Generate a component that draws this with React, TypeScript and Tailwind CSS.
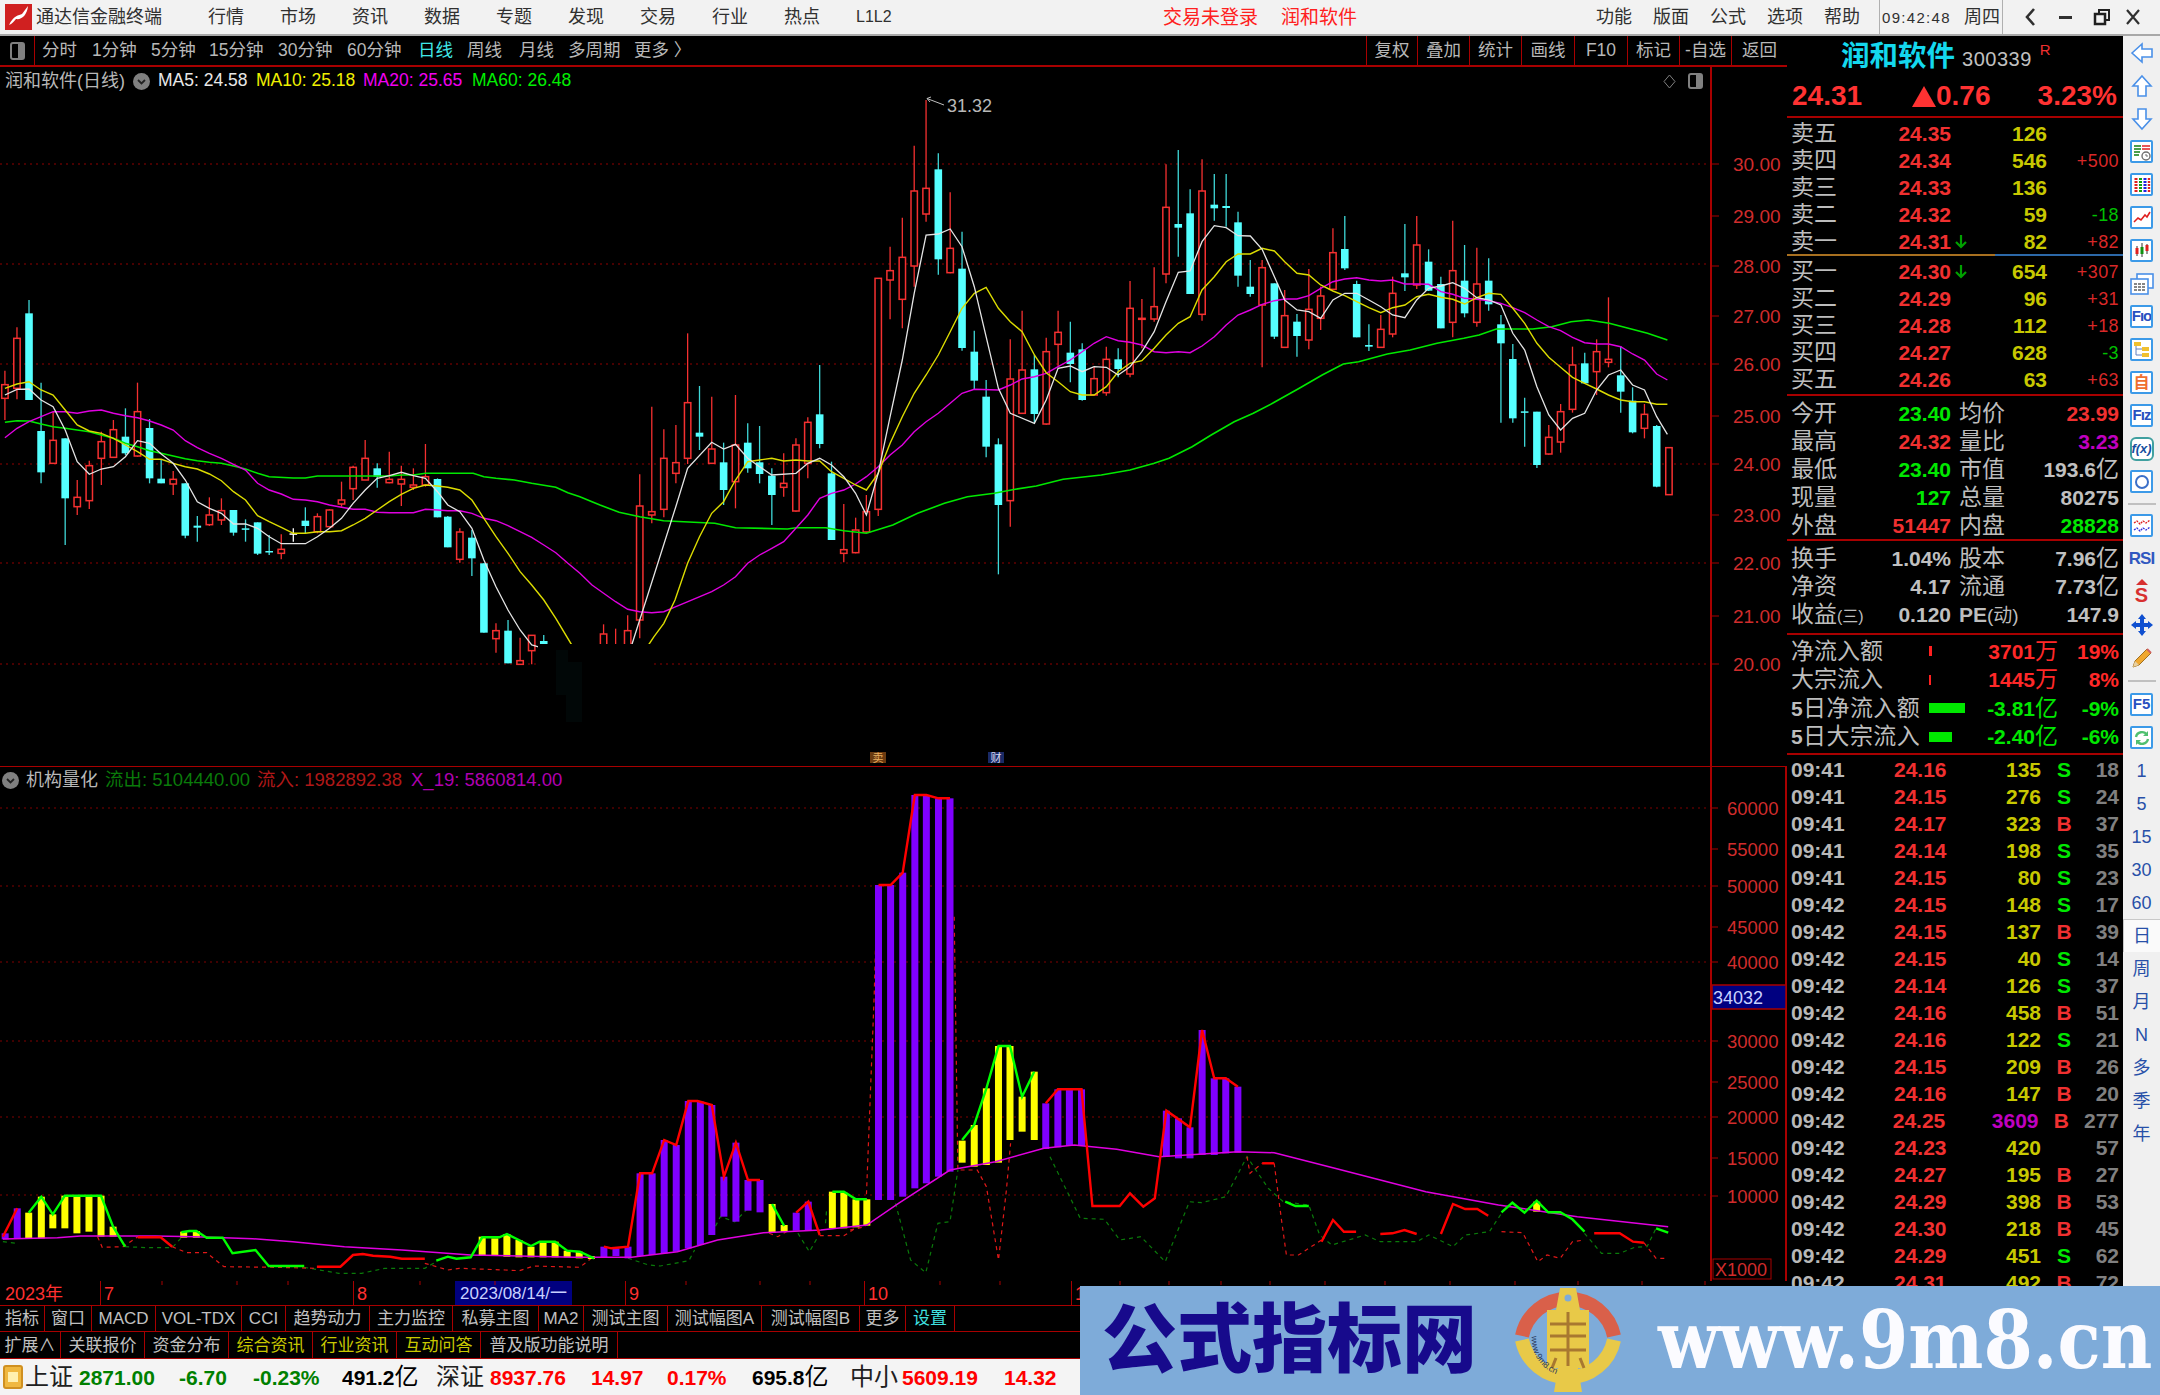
import React from "react";

type C = [number, number, number, number, number, string];
type P = [number, number];
const f8 = (x: number) => x / 2.24;
const f9 = (x: number) => 600 + x / 2.613;
const f10 = (x: number) => 1150 + x / 2.613;
const f11 = (x: number) => x / 1.742;
const f12 = (x: number) => 850 + x / 1.65;

const c8: C[] = [
  [11,302,344,385,450,"r"],[38,172,205,355,388,"r"],[65,90,130,390,390,"c"],[92,338,483,607,640,"c"],[119,425,511,580,582,"r"],[146,505,505,685,825,"c"],[173,630,682,710,735,"r"],[200,572,587,692,717,"r"],[227,485,515,565,645,"r"],[254,450,479,562,562,"r"],[281,415,500,550,555,"c"],[308,338,425,558,560,"r"],[335,447,474,625,640,"c"],[361,570,626,640,640,"c"],[388,603,628,642,675,"r"],[415,640,640,797,805,"c"],[442,738,767,773,815,"c"],[469,682,735,764,768,"r"],[496,685,722,750,765,"r"],[523,720,720,788,797,"c"],[550,748,775,778,815,"c"],[577,757,757,851,855,"c"],[603,795,843,847,855,"c"],[630,793,838,850,868,"r"],[657,775,790,792,815,"w"],[684,712,752,768,790,"c"],[711,730,740,785,790,"r"],[738,718,720,770,772,"r"],[765,635,690,702,710,"r"],[791,587,592,656,690,"r"],[818,510,565,630,630,"r"],[845,580,595,620,653,"c"],[872,545,628,638,640,"r"],[899,587,628,642,708,"r"],[926,595,645,652,660,"r"],[953,522,620,645,650,"r"],[980,625,627,742,742,"c"],[1003,738,740,832,832,"c"],[1030,775,786,868,878,"r"],[1057,780,803,865,918,"c"],[1084,880,880,1088,1088,"c"],[1111,1060,1082,1106,1148,"r"],[1138,1050,1082,1180,1180,"c"],[1165,1103,1172,1183,1185,"r"],[1191,1095,1096,1142,1183,"r"],[1218,1095,1113,1130,1130,"c"],[1352,1063,1092,1200,1200,"r"],[1379,1076,1200,1200,1200,"r"],[1406,1036,1082,1200,1200,"r"],[1433,613,708,1050,1105,"r"],[1460,410,725,735,760,"r"],[1487,478,565,718,742,"r"],[1514,465,578,610,640,"r"],
];
const c9: C[] = [
  [229,760,968,1135,1152,"r"],[260,918,1058,1070,1110,"c"],[292,950,1107,1150,1152,"r"],[323,1088,1147,1230,1275,"c"],[354,945,1095,1205,1285,"r"],[386,1030,1088,1165,1178,"c"],[417,1038,1147,1182,1210,"c"],[449,1165,1187,1245,1335,"c"],[480,1120,1210,1222,1250,"r"],[512,1075,1095,1293,1295,"r"],[543,1012,1027,1150,1195,"r"],[574,855,1003,1092,1105,"c"],[605,1145,1180,1380,1380,"c"],[637,1272,1409,1420,1447,"r"],[668,1313,1350,1418,1420,"r"],[696,1245,1295,1356,1358,"r"],[727,595,595,1288,1308,"r"],[758,500,572,600,718,"r"],[790,413,532,658,745,"r"],[821,197,333,558,620,"r"],[852,60,325,402,425,"r"],[884,220,268,538,584,"c"],[915,337,505,578,580,"r"],[946,455,566,804,812,"c"],[978,752,815,902,930,"c"],[1009,900,950,1100,1132,"c"],[1041,1075,1093,1275,1483,"c"],[1072,778,897,1262,1340,"r"],[1103,692,870,1000,1002,"r"],[1135,825,868,1002,1030,"c"],[1166,773,815,1032,1034,"r"],[1197,692,757,793,860,"r"],[1229,725,818,852,907,"c"],[1260,790,808,960,962,"c"],[1291,860,896,945,945,"r"],[1323,800,838,938,947,"r"],[1354,805,838,867,892,"c"],[1385,603,685,882,892,"r"],[1416,657,715,718,805,"r"],[1448,562,680,717,725,"r"],[1479,253,382,582,610,"r"],[1511,210,432,443,530,"c"],[1542,328,400,642,642,"c"],
];
const c10: C[] = [
  [136,88,183,553,572,"r"],[168,132,224,235,272,"c"],[199,132,228,234,290,"c"],[230,245,277,437,470,"c"],[262,390,470,492,500,"c"],[293,390,413,525,712,"r"],[325,460,460,620,627,"c"],[352,480,557,652,654,"r"],[384,552,575,618,680,"c"],[415,417,538,630,658,"r"],[446,470,498,565,600,"r"],[478,295,368,478,480,"r"],[509,258,357,415,420,"c"],[540,452,462,622,622,"c"],[572,583,645,650,663,"c"],[603,555,598,652,653,"r"],[634,440,490,612,622,"r"],[666,282,430,442,483,"c"],[697,258,345,465,477,"r"],[728,358,395,482,483,"c"],[760,440,462,595,595,"c"],[791,272,422,577,622,"r"],[822,345,452,550,562,"c"],[854,353,462,577,590,"r"],[885,385,452,523,542,"c"],[917,555,583,640,878,"c"],[948,642,687,865,878,"c"],[979,803,844,847,950,"c"],[1011,845,845,1005,1014,"c"],[1042,885,922,972,974,"r"],[1073,822,845,936,968,"r"],[1104,650,705,838,848,"r"],[1136,668,700,760,760,"c"],[1167,628,665,725,795,"r"],[1198,502,688,697,712,"r"],[1230,648,736,785,848,"c"],[1261,772,812,907,910,"c"],[1292,822,853,895,925,"r"],[1324,885,888,1070,1072,"c"],[1356,952,953,1094,1094,"r"],
];
const candles = [
  ...c8.map(([x, a, b, c, d, k]) => [f8(x), 270 + a / 3, 270 + b / 3, 270 + c / 3, 270 + d / 3, k] as const),
  ...c9.map(([x, a, b, c, d, k]) => [f9(x), 80 + a / 3, 80 + b / 3, 80 + c / 3, 80 + d / 3, k] as const),
  ...c10.map(([x, a, b, c, d, k]) => [f10(x), 130 + a / 3, 130 + b / 3, 130 + c / 3, 130 + d / 3, k] as const),
];

const conv = (a: P[], fx: (n: number) => number, y0: number) => a.map(([x, y]) => `${fx(x).toFixed(1)},${(y0 + y / 3).toFixed(1)}`).join(" ");

const white = [
  conv([[11,375],[38,358],[65,357],[92,390],[119,410],[146,480],[173,575],[200,613],[227,597],[254,590],[281,560],[308,512],[335,520],[361,552],[388,580],[415,630],[442,695],[469,715],[496,730],[523,762],[550,762],[577,775],[603,800],[630,821],[684,821],[711,800],[738,775],[765,745],[791,700],[818,660],[845,625],[872,617],[899,607],[926,617],[953,625],[980,665],[1003,705],[1030,725],[1057,775],[1084,870],[1111,950],[1138,1020],[1165,1080],[1191,1125],[1210,1132],[1415,1125],[1433,1050]], f8, 270),
  conv([[122,1555],[198,1280],[229,1165],[292,1087],[323,1107],[354,1093],[386,1135],[417,1160],[449,1185],[512,1180],[543,1150],[574,1135],[605,1155],[637,1190],[668,1240],[696,1305],[727,1180],[758,1010],[790,840],[821,640],[852,465],[884,462],[915,447],[946,500],[978,620],[1009,770],[1041,925],[1072,1000],[1135,1030],[1166,960],[1197,865],[1229,858],[1260,875],[1291,860],[1323,862],[1354,885],[1385,860],[1416,815],[1448,755],[1479,665],[1511,577],[1542,573]], f9, 80),
  conv([[136,335],[168,287],[199,293],[230,317],[262,318],[293,358],[325,440],[352,510],[384,540],[415,545],[446,565],[478,510],[509,490],[540,490],[572,510],[603,530],[634,555],[666,563],[697,510],[728,475],[760,468],[791,458],[822,475],[854,503],[885,510],[917,525],[948,610],[979,660],[1011,770],[1042,855],[1073,900],[1104,865],[1136,850],[1167,780],[1198,735],[1230,720],[1261,765],[1292,780],[1324,860],[1352,913]], f10, 130),
].join(" ");
const yellow = [
  conv([[11,355],[38,342],[65,335],[92,360],[119,375],[146,420],[173,465],[200,483],[227,490],[254,505],[281,525],[308,545],[335,568],[361,568],[388,580],[415,590],[442,597],[469,612],[496,632],[523,665],[550,690],[577,737],[603,755],[630,772],[657,790],[684,790],[711,785],[738,785],[765,782],[791,765],[818,745],[845,720],[872,695],[899,673],[926,655],[953,645],[980,648],[1003,652],[1030,660],[1057,690],[1084,745],[1111,800],[1138,850],[1165,905],[1191,945],[1218,990],[1245,1045],[1283,1130],[1450,1130],[1465,1100],[1487,1060]], f8, 270),
  conv([[196,1560],[229,1450],[260,1370],[292,1300],[323,1265],[354,1200],[386,1145],[417,1140],[449,1135],[480,1143],[512,1140],[543,1143],[574,1143],[605,1175],[637,1195],[668,1215],[696,1230],[727,1180],[758,1090],[790,1010],[821,940],[852,885],[884,825],[915,755],[946,685],[978,640],[1009,622],[1041,685],[1072,725],[1103,755],[1135,825],[1166,878],[1197,905],[1229,935],[1260,945],[1291,945],[1323,920],[1354,875],[1385,850],[1416,842],[1448,805],[1479,765],[1511,730],[1542,710]], f9, 80),
  conv([[136,480],[168,440],[199,395],[230,372],[262,372],[293,355],[325,363],[352,395],[384,430],[415,435],[446,465],[478,483],[509,497],[540,515],[572,533],[603,548],[634,533],[666,525],[697,500],[728,493],[760,502],[791,508],[822,522],[854,503],[885,490],[917,493],[948,535],[979,580],[1011,640],[1042,682],[1073,712],[1104,742],[1136,760],[1167,777],[1198,795],[1230,810],[1261,815],[1292,815],[1324,823],[1352,823]], f10, 130),
].join(" ");
const magenta = [
  conv([[11,503],[38,475],[65,455],[92,440],[119,425],[146,425],[173,430],[200,423],[227,420],[254,430],[281,437],[308,443],[335,453],[361,465],[388,480],[415,512],[442,533],[469,550],[496,565],[523,583],[550,600],[577,640],[603,660],[630,672],[657,688],[684,690],[711,695],[738,705],[765,712],[791,718],[818,718],[845,727],[872,728],[899,728],[926,728],[953,718],[980,720],[1003,722],[1030,722],[1057,730],[1084,745],[1111,752],[1138,767],[1165,785],[1191,802],[1218,825],[1245,848],[1272,880],[1299,910],[1326,945],[1352,970],[1379,995],[1406,1018],[1433,1025],[1460,1028],[1487,1025],[1514,1010],[1541,995]], f8, 270),
  conv([[292,1535],[323,1515],[354,1490],[386,1450],[417,1425],[449,1405],[480,1385],[512,1345],[543,1305],[574,1255],[605,1240],[637,1230],[668,1212],[696,1190],[727,1160],[758,1125],[790,1095],[821,1055],[852,1025],[884,1000],[915,970],[946,940],[978,928],[1041,930],[1072,915],[1103,897],[1135,890],[1166,880],[1197,860],[1229,840],[1260,815],[1291,790],[1323,770],[1354,782],[1385,787],[1416,795],[1448,815],[1479,818],[1511,815],[1542,818]], f9, 80),
  conv([[136,648],[168,620],[199,585],[230,555],[262,540],[293,523],[325,512],[352,507],[384,507],[415,497],[446,475],[478,455],[509,447],[540,443],[572,450],[603,453],[634,450],[666,462],[697,462],[728,463],[760,485],[791,493],[822,505],[854,508],[885,512],[917,520],[948,533],[979,548],[1011,570],[1042,590],[1073,602],[1104,622],[1136,638],[1167,642],[1198,642],[1230,650],[1261,672],[1292,690],[1324,732],[1352,750]], f10, 130),
].join(" ");
const green = [
  conv([[11,457],[38,452],[65,453],[92,462],[119,470],[146,475],[173,480],[200,485],[227,495],[254,505],[281,520],[308,530],[335,542],[361,550],[388,558],[415,566],[442,572],[469,577],[496,580],[523,588],[550,597],[577,610],[603,620],[657,624],[684,624],[711,618],[872,618],[899,615],[926,615],[953,610],[1060,610],[1084,620],[1111,625],[1152,630],[1191,640],[1245,652],[1272,668],[1299,680],[1326,695]], f8, 270),
  conv([[0,1275],[50,1297],[104,1310],[166,1322],[245,1327],[300,1330],[354,1343],[490,1347],[512,1343],[590,1343],[637,1352],[696,1360],[765,1335],[830,1300],[900,1270],[960,1250],[1030,1240],[1085,1228],[1140,1218],[1210,1198],[1310,1185],[1385,1170],[1448,1150]], f9, 80),
  conv([[50,985],[110,950],[160,915],[220,875],[270,850],[320,820],[390,775],[450,735],[505,702],[545,695],[620,672],[680,660],[750,640],[820,625],[860,615],[905,597],[1000,597],[1050,590],[1100,575],[1145,570],[1200,580],[1260,598],[1300,610],[1352,630]], f10, 130),
].join(" ");

const bars11: [number, number, number, string][] = [
  [9,640,658,"p"],[30,565,655,"p"],[50,578,655,"y"],[72,530,655,"y"],[92,583,625,"y"],[113,527,625,"y"],[134,527,640,"y"],[155,527,635,"y"],[176,527,650,"y"],[197,620,650,"y"],[320,635,653,"y"],[342,633,653,"y"],[840,650,708,"y"],[862,655,708,"y"],[883,642,710,"y"],[904,660,712,"y"],[925,680,712,"y"],[946,665,712,"y"],[967,665,712,"y"],[988,692,712,"y"],[1009,695,715,"y"],[1030,708,717,"y"],[1052,680,712,"p"],[1073,685,708,"p"],[1094,680,715,"p"],[1115,460,708,"p"],[1136,460,705,"p"],[1157,360,700,"p"],[1178,375,695,"p"],[1199,243,685,"p"],[1220,245,675,"p"],[1240,255,645,"p"],[1261,470,590,"p"],[1282,368,605,"p"],[1303,480,572,"p"],[1324,480,577,"p"],[1345,552,638,"y"],[1366,615,635,"y"],[1387,578,632,"p"],[1408,545,630,"p"],[1450,515,625,"y"],[1470,518,625,"y"],[1491,538,622,"y"],[1510,538,617,"y"],
];
const bars12: [number, number, number, string][] = [
  [47,315,1260,"p"],[67,315,1260,"p"],[87,278,1250,"p"],[107,45,1225,"p"],[126,45,1210,"p"],[146,55,1190,"p"],[165,55,1175,"p"],[185,1082,1148,"y"],[205,1035,1160,"y"],[225,925,1155,"y"],[245,798,1148,"y"],[264,798,1080,"y"],[284,950,1055,"y"],[304,875,1080,"y"],[323,970,1107,"p"],[343,928,1102,"p"],[362,928,1097,"p"],[382,928,1097,"p"],[522,992,1130,"p"],[542,1015,1135,"p"],[561,1042,1135,"p"],[581,750,1125,"p"],[601,895,1125,"p"],[620,895,1120,"p"],[640,920,1118,"p"],[1133,1265,1295,"y"],
];
const thick: [string, string][] = [
  ["#ff0000", conv([[5,650],[30,565]], f11, 1020)],
  ["#00ff00", conv([[50,578],[72,530],[92,583],[113,527],[176,527],[197,620],[218,680]], f11, 1020)],
  ["#ff0000", conv([[240,652],[280,652],[300,680]], f11, 1020)],
  ["#00ff00", conv([[316,637],[330,633],[342,633],[360,653],[388,653],[405,700],[445,690],[468,738],[530,738]], f11, 1020)],
  ["#ff0000", conv([[552,740],[593,740],[615,705],[632,702],[650,707],[680,710],[700,716],[740,716]], f11, 1020)],
  ["#00ff00", conv([[760,722],[780,710],[795,716],[820,712],[840,652],[870,652],[883,642],[904,660],[925,678],[940,665],[967,665],[988,692],[1010,695],[1035,715]], f11, 1020)],
  ["#ff0000", conv([[1052,680],[1065,685],[1094,680],[1115,460],[1136,460],[1157,360],[1178,375],[1199,243],[1215,243],[1240,255],[1261,470],[1282,368],[1303,480],[1324,480]], f11, 1020)],
  ["#00ff00", conv([[1345,552],[1366,618]], f11, 1020)],
  ["#ff0000", conv([[1387,578],[1408,545],[1428,645]], f11, 1020)],
  ["#00ff00", conv([[1450,515],[1470,515],[1491,538],[1510,538]], f11, 1020)],
  ["#ff0000", conv([[47,315],[67,315],[87,278],[107,45],[126,45],[146,55],[165,55]], f12, 780)],
  ["#00ff00", conv([[185,1080],[205,1035],[225,925],[245,798],[264,798],[284,950],[304,875]], f12, 780)],
  ["#ff0000", conv([[323,970],[343,928],[382,928],[400,1278],[445,1278],[462,1240],[484,1280],[503,1255],[522,992],[561,1042],[581,750],[601,895],[620,895],[640,920]], f12, 780)],
  ["#ff0000", conv([[680,1150],[700,1150]], f12, 780)],
  ["#00ff00", conv([[718,1265],[735,1278],[757,1278]], f12, 780)],
  ["#ff0000", conv([[778,1385],[797,1320],[815,1355],[835,1355]], f12, 780)],
  ["#ff0000", conv([[875,1362],[895,1360],[915,1350],[935,1362]], f12, 780)],
  ["#ff0000", conv([[975,1362],[995,1272],[1015,1287],[1035,1287],[1053,1307]], f12, 780)],
  ["#00ff00", conv([[1075,1297],[1093,1268],[1113,1298],[1133,1262],[1152,1297],[1172,1297],[1192,1318],[1212,1355]], f12, 780)],
  ["#ff0000", conv([[1228,1360],[1270,1360],[1292,1385],[1310,1388]], f12, 780)],
  ["#00ff00", conv([[1330,1345],[1350,1358]], f12, 780)],
];
const subMagenta = [
  conv([[5,657],[60,655],[100,653],[140,648],[270,648],[340,650],[440,656],[510,665],[600,680],[700,690],[820,705],[1000,712],[1100,712],[1180,695],[1250,660],[1330,638],[1430,630],[1510,615]], f11, 1020),
  conv([[80,1270],[165,1170],[240,1145],[320,1105],[370,1095],[440,1108],[510,1130],[640,1115],[700,1118],[800,1165],[950,1235],[1070,1275],[1200,1310],[1350,1340]], f12, 780),
].join(" ");
const dashG: string[] = [
  conv([[75,1270],[100,1440],[125,1478],[145,1330],[165,1325],[178,1170]], f12, 780),
  conv([[330,1130],[380,1315],[420,1318],[445,1380],[480,1370],[520,1445],[560,1265],[580,1268],[620,1250],[655,1130],[690,1225],[715,1265],[757,1275],[775,1365],[795,1395],[850,1365],[875,1385],[935,1385],[955,1365],[995,1400],[1015,1365],[1055,1355],[1075,1300]], f12, 780),
  conv([[1212,1360],[1240,1420],[1270,1420],[1295,1402],[1315,1400],[1330,1345]], f12, 780),
  conv([[5,665],[30,670]], f11, 1020),
  conv([[218,680],[260,683],[300,683],[315,655]], f11, 1020),
  conv([[530,742],[590,760],[630,760],[670,745],[740,745],[760,725]], f11, 1020),
  conv([[1094,715],[1130,735],[1150,738],[1200,722],[1210,690]], f11, 1020),
  conv([[1240,640],[1255,590],[1280,605],[1300,570]], f11, 1020),
  conv([[1390,640],[1410,695],[1425,650]], f11, 1020),
  conv([[1438,610],[1440,570]], f11, 1020),
];
const dashR: string[] = [
  conv([[0,1350],[25,1340],[40,645],[45,315]], f12, 780),
  conv([[172,410],[178,1170],[210,1170],[225,1220],[245,1440],[258,1230],[265,1090]], f12, 780),
  conv([[655,1130],[660,1180],[680,1150]], f12, 780),
  conv([[700,1150],[712,1320],[720,1425],[740,1425],[778,1380]], f12, 780),
  conv([[1075,1355],[1110,1358],[1135,1445],[1150,1425],[1172,1435],[1192,1385],[1212,1380]], f12, 780),
  conv([[1310,1388],[1330,1435],[1350,1435]], f12, 780),
  conv([[170,650],[178,682],[215,680],[240,650]], f11, 1020),
  conv([[300,680],[325,698],[360,698],[390,740],[480,742],[550,745]], f11, 1020),
  conv([[740,730],[780,750],[800,745],[880,750],[905,752],[930,738],[1010,742],[1030,715]], f11, 1020),
  conv([[1340,640],[1355,650],[1370,635]], f11, 1020),
  conv([[1428,647],[1470,647],[1490,625]], f11, 1020),
];

const RED = "#a80000";
const priceLabels: [string, number][] = [["30.00",164],["29.00",216],["28.00",266],["27.00",316],["26.00",364],["25.00",416],["24.00",464],["23.00",515],["22.00",563],["21.00",616],["20.00",664]];
const volLabels: [string, number][] = [["60000",808],["55000",849],["50000",886],["45000",927],["40000",962],["30000",1041],["25000",1082],["20000",1117],["15000",1158],["10000",1196]];

function TopChart() {
  return (
    <svg width="1787" height="699" style={{ display: "block" }}>
      <g transform="translate(0,-67)">
        {[164, 264, 364, 464, 563, 664].map((y) => (
          <line key={y} x1="0" x2="1711" y1={y} y2={y} stroke="#900000" strokeDasharray="2 4" />
        ))}
        <line x1="1711" x2="1711" y1="67" y2="766" stroke={RED} strokeWidth="2" />
        {priceLabels.map(([t, y]) => (
          <g key={t}>
            <line x1="1711" x2="1719" y1={y} y2={y} stroke={RED} />
            <text x="1733" y={y + 7} fill="#d02c2c" fontSize="19">{t}</text>
          </g>
        ))}
        {candles.map(([x, a, b, c, d, k], i) => {
          const col = k === "r" ? "#f53030" : k === "c" ? "#55ffff" : "#ffffff";
          const wick = k === "c" ? "#3fd8d8" : col;
          return (
            <g key={i}>
              <line x1={x} x2={x} y1={a} y2={d} stroke={wick} strokeWidth="1.3" />
              {k === "r" ? (
                <rect x={x - 3.2} y={b} width="6.4" height={Math.max(c - b, 1)} fill="#000" stroke={col} strokeWidth="1.5" />
              ) : (
                <rect x={x - 3.8} y={b} width="7.6" height={Math.max(c - b, 1.5)} fill={col} />
              )}
            </g>
          );
        })}
        <polyline points={green} fill="none" stroke="#00e800" strokeWidth="1.6" />
        <polyline points={magenta} fill="none" stroke="#e000e0" strokeWidth="1.4" />
        <polyline points={yellow} fill="none" stroke="#dcdc00" strokeWidth="1.4" />
        <polyline points={white} fill="none" stroke="#e4e4e4" strokeWidth="1.3" />
        <rect x="538" y="644" width="113" height="122" fill="#000" />
        <rect x="556" y="650" width="12" height="45" fill="#010707" />
        <rect x="566" y="662" width="16" height="60" fill="#010707" />
        <path d="M944 105 L927 98.5 M927 98.5 L931 97 M927 98.5 L930 102" stroke="#c0c0c0" fill="none" />
        <text x="947" y="112" fontSize="18" fill="#b8b8b8">31.32</text>
        <rect x="870" y="752" width="16" height="11" fill="#6a3b10" />
        <text x="878" y="762" fontSize="11" fill="#e8b060" textAnchor="middle">卖</text>
        <rect x="988" y="752" width="16" height="11" fill="#1a2a66" />
        <text x="996" y="762" fontSize="11" fill="#d8d8f0" textAnchor="middle">财</text>
      </g>
    </svg>
  );
}

function SubChart() {
  return (
    <svg width="1787" height="515" style={{ display: "block" }}>
      <g transform="translate(0,-766)">
        <line x1="0" x2="1787" y1="766" y2="766" stroke={RED} strokeWidth="2" />
        <line x1="1786" x2="1786" y1="766" y2="1281" stroke={RED} strokeWidth="2" />
        <line x1="1711" x2="1711" y1="766" y2="1281" stroke={RED} strokeWidth="2" />
        {[808, 886, 962, 1041, 1117, 1195].map((y) => (
          <line key={y} x1="0" x2="1711" y1={y} y2={y} stroke="#800000" strokeDasharray="2 4" />
        ))}
        {volLabels.map(([t, y]) => (
          <g key={t}>
            <line x1="1711" x2="1718" y1={y} y2={y} stroke={RED} />
            <text x="1727" y={y + 7} fill="#d02c2c" fontSize="18.5">{t}</text>
          </g>
        ))}
        {dashG.map((p, i) => (
          <polyline key={i} points={p} fill="none" stroke="#0a7a0a" strokeDasharray="4 4" strokeWidth="1.2" />
        ))}
        {dashR.map((p, i) => (
          <polyline key={i} points={p} fill="none" stroke="#e01818" strokeDasharray="4 4" strokeWidth="1.2" />
        ))}
        {bars11.map(([x, a, b, k], i) => (
          <rect key={i} x={f11(x) - 3.5} y={1020 + a / 3} width="7" height={(b - a) / 3} fill={k === "p" ? "#8000ff" : "#ffff00"} />
        ))}
        {bars12.map(([x, a, b, k], i) => (
          <rect key={i} x={f12(x) - 3.5} y={780 + a / 3} width="7" height={(b - a) / 3} fill={k === "p" ? "#8000ff" : "#ffff00"} />
        ))}
        <polyline points={subMagenta} fill="none" stroke="#e000e0" strokeWidth="1.5" />
        {thick.map(([c, p], i) => (
          <polyline key={i} points={p} fill="none" stroke={c} strokeWidth="2.4" />
        ))}
        <rect x="1712" y="985" width="74" height="24" fill="#000080" stroke={RED} strokeWidth="1.5" />
        <text x="1713" y="1004" fontSize="18" fill="#c8d0ff">34032</text>
        <rect x="1713" y="1259" width="58" height="20" fill="#000" stroke={RED} />
        <text x="1715" y="1276" fontSize="18" fill="#d02c2c">X1000</text>
      </g>
    </svg>
  );
}

const ChevronCircle = () => (
  <span className="flex items-center justify-center w-[17px] h-[17px] rounded-full bg-[#808080]">
    <svg width="11" height="11" viewBox="0 0 11 11"><path d="M2 4 L5.5 7.5 L9 4" stroke="#222" strokeWidth="1.8" fill="none" /></svg>
  </span>
);

function ToolItem({ w, children, cyan }: { w: string; children: React.ReactNode; cyan?: boolean }) {
  return <div className={`${w} ${cyan ? "text-[#40e8e8]" : "text-[#b8b8b8]"} whitespace-nowrap`}>{children}</div>;
}

function Toolbar() {
  const right = [
    ["复权", "w-[51px]"], ["叠加", "w-[52px]"], ["统计", "w-[52px]"], ["画线", "w-[53px]"], ["F10", "w-[53px]"], ["标记", "w-[52px]"], ["-自选", "w-[52px]"], ["返回", "w-[56px]"],
  ];
  return (
    <div className="h-[31px] flex bg-black border-b-2 border-[#a80000] text-[17.5px] leading-none">
      <div className="w-[35px] flex items-center justify-center border-r border-[#a80000]">
        <div className="w-[15px] h-[18px] border-2 border-[#808080] rounded-[3px] flex justify-end"><div className="w-[5px] bg-[#808080]" /></div>
      </div>
      <div className="flex items-center pl-[7px] w-[1331px]">
        <ToolItem w="w-[50px]">分时</ToolItem>
        <ToolItem w="w-[59px]">1分钟</ToolItem>
        <ToolItem w="w-[58px]">5分钟</ToolItem>
        <ToolItem w="w-[69px]">15分钟</ToolItem>
        <ToolItem w="w-[69px]">30分钟</ToolItem>
        <ToolItem w="w-[71px]">60分钟</ToolItem>
        <ToolItem w="w-[49px]" cyan>日线</ToolItem>
        <ToolItem w="w-[52px]">周线</ToolItem>
        <ToolItem w="w-[49px]">月线</ToolItem>
        <ToolItem w="w-[66px]">多周期</ToolItem>
        <ToolItem w="w-[60px]">更多 〉</ToolItem>
      </div>
      {right.map(([t, w]) => (
        <div key={t} className={`${w} h-full flex items-center justify-center border-l border-[#a80000] text-[#b8b8b8]`}>{t}</div>
      ))}
    </div>
  );
}

function XAxis() {
  const cell = "h-full flex items-center pl-[3px] pt-[1px] text-[#ff3030] border-l border-[#a80000]";
  return (
    <div className="relative h-[25px] flex bg-black border-b border-[#a80000] text-[18px] leading-none">
      <div className="w-[100px] h-full flex items-center pl-[5px] pt-[1px] text-[#ff3030]">2023年</div>
      <div className={`${cell} w-[253px]`}>7</div>
      <div className={`${cell} w-[102px]`}>8</div>
      <div className="w-[117px] h-full flex items-center justify-center bg-[#000080] text-[#c8d0ff] text-[17px]">2023/08/14/一</div>
      <div className="w-[53px]" />
      <div className={`${cell} w-[239px]`}>9</div>
      <div className={`${cell} w-[207px]`}>10</div>
      <div className={`${cell} flex-1`}>1</div>
      <svg className="absolute left-0 top-0" width="1787" height="6">
        {[162, 237, 288, 420, 495, 686, 760, 810, 940, 1000, 1120, 1169, 1221, 1270, 1325, 1385, 1450, 1515, 1578, 1642, 1705].map((x) => (
          <line key={x} x1={x} x2={x} y1="0" y2="4" stroke="#a80000" />
        ))}
      </svg>
    </div>
  );
}

function ButtonRow({ items, h }: { items: [string, string, string?][]; h: string }) {
  return (
    <div className={`${h} flex bg-black border-b border-[#a80000] text-[17px] leading-none`}>
      {items.map(([t, w, c]) => (
        <div key={t} className={`${w} ${c || "text-[#c0c0c0]"} h-full flex items-center justify-center border-r border-[#a80000] whitespace-nowrap`}>{t}</div>
      ))}
    </div>
  );
}

const LBL = "text-[23px] text-[#bdbdbd] leading-none font-normal whitespace-nowrap";
const NUM = "text-[21px] font-bold leading-none whitespace-nowrap";
const RC = "text-[#f03030]";
const YC = "text-[#c8c800]";
const GC = "text-[#00e800]";
const WC = "text-[#c0c0c0]";

function QuoteRow({ l, p, arrow, v, d }: { l: string; p: string; arrow?: boolean; v: string; d?: string }) {
  const dc = d && d[0] === "-" ? "text-[#00c000]" : "text-[#d82828]";
  return (
    <div className="h-[27px] flex items-center">
      <div className={`${LBL} w-[106px]`}>{l}</div>
      <div className={`${NUM} ${RC} w-[54px] text-right`}>{p}</div>
      <div className="w-[20px] flex justify-center">
        {arrow && (
          <svg width="12" height="14" viewBox="0 0 12 14"><path d="M6 0 V12 M1 7 L6 12 L11 7" stroke="#00a000" strokeWidth="2.2" fill="none" /></svg>
        )}
      </div>
      <div className={`${NUM} ${YC} w-[76px] text-right`}>{v}</div>
      <div className={`flex-1 text-right text-[18px] tracking-[0.4px] leading-none ${dc}`}>{d}</div>
    </div>
  );
}

const Yi = ({ v }: { v: string }) =>
  v.endsWith("亿") ? (
    <>
      {v.slice(0, -1)}
      <span className="font-normal text-[23px]">亿</span>
    </>
  ) : (
    <>{v}</>
  );

function StatRow({ a, av, ac, b, bv, bc }: { a: React.ReactNode; av: string; ac: string; b: React.ReactNode; bv: string; bc: string }) {
  return (
    <div className="h-[28px] flex items-center">
      <div className={`${LBL} w-[90px]`}>{a}</div>
      <div className={`${NUM} ${ac} w-[70px] text-right whitespace-nowrap`}>{av}</div>
      <div className={`${LBL} pl-[8px] w-[76px]`}>{b}</div>
      <div className={`${NUM} ${bc} flex-1 text-right`}><Yi v={bv} /></div>
    </div>
  );
}

function FlowRow({ l, bar, v, u, p, c }: { l: React.ReactNode; bar: string; v: string; u: string; p: string; c: string }) {
  return (
    <div className="h-[28.5px] flex items-center">
      <div className={`${LBL} w-[138px]`}>{l}</div>
      <div className="w-[40px] flex"><div className={bar} /></div>
      <div className={`flex-1 text-right ${NUM} ${c}`}>{v}<span className="font-normal text-[23px]">{u}</span></div>
      <div className={`w-[61px] text-right ${NUM} ${c}`}>{p}</div>
    </div>
  );
}

const trades: [string, string, string, string, string][] = [
  ["09:41","24.16","135","S","18"],["09:41","24.15","276","S","24"],["09:41","24.17","323","B","37"],["09:41","24.14","198","S","35"],["09:41","24.15","80","S","23"],["09:42","24.15","148","S","17"],["09:42","24.15","137","B","39"],["09:42","24.15","40","S","14"],["09:42","24.14","126","S","37"],["09:42","24.16","458","B","51"],["09:42","24.16","122","S","21"],["09:42","24.15","209","B","26"],["09:42","24.16","147","B","20"],["09:42","24.25","3609","B","277"],["09:42","24.23","420","","57"],["09:42","24.27","195","B","27"],["09:42","24.29","398","B","53"],["09:42","24.30","218","B","45"],["09:42","24.29","451","S","62"],["09:42","24.31","492","B","72"],
];

function InfoPanel() {
  const hr = "border-b-2 border-[#a80000]";
  return (
    <div className="w-[336px] h-full bg-black flex flex-col pl-[4px] pr-[4px] overflow-hidden">
      <div className="-mx-[4px] px-[5px] h-[82px] flex flex-col border-b-2 border-[#a80000]">
        <div className="h-[40px] flex items-center pl-[49px]">
          <span className="text-[28.5px] font-bold text-[#14d8ee] leading-none">润和软件</span>
          <span className="text-[20px] tracking-[0.5px] text-[#c0c0c0] ml-[7px] leading-none mt-[5px]">300339</span>
          <span className="text-[15px] text-[#f03030] ml-[8px] -mt-[14px] leading-none">R</span>
        </div>
        <div className="flex-1 flex items-center text-[28px] font-bold text-[#ff3232] leading-none">
          <div className="w-[120px]">24.31</div>
          <div className="w-[120px] flex items-center">
            <svg width="24" height="21" viewBox="0 0 24 21"><path d="M12 0 L24 21 H0 Z" fill="#ff3232" /></svg>
            <span>0.76</span>
          </div>
          <div className="flex-1 text-right pr-[1px]">3.23%</div>
        </div>
      </div>
      <div className="pt-[2px] h-[136px]">
        <QuoteRow l="卖五" p="24.35" v="126" />
        <QuoteRow l="卖四" p="24.34" v="546" d="+500" />
        <QuoteRow l="卖三" p="24.33" v="136" />
        <QuoteRow l="卖二" p="24.32" v="59" d="-18" />
        <QuoteRow l="卖一" p="24.31" arrow v="82" d="+82" />
      </div>
      <div className="-mx-[4px] h-[2px] flex">
        <div className="w-[208px] bg-[#a87020]" />
        <div className="flex-1 bg-[#2c68a8]" />
      </div>
      <div className={`-mx-[4px] px-[4px] pt-[2px] h-[140px] ${hr}`}>
        <QuoteRow l="买一" p="24.30" arrow v="654" d="+307" />
        <QuoteRow l="买二" p="24.29" v="96" d="+31" />
        <QuoteRow l="买三" p="24.28" v="112" d="+18" />
        <QuoteRow l="买四" p="24.27" v="628" d="-3" />
        <QuoteRow l="买五" p="24.26" v="63" d="+63" />
      </div>
      <div className={`-mx-[4px] px-[4px] pt-[3px] h-[145px] ${hr}`}>
        <StatRow a="今开" av="23.40" ac={GC} b="均价" bv="23.99" bc={RC} />
        <StatRow a="最高" av="24.32" ac={RC} b="量比" bv="3.23" bc="text-[#c000c0]" />
        <StatRow a="最低" av="23.40" ac={GC} b="市值" bv="193.6亿" bc={WC} />
        <StatRow a="现量" av="127" ac={GC} b="总量" bv="80275" bc={WC} />
        <StatRow a="外盘" av="51447" ac={RC} b="内盘" bv="28828" bc={GC} />
      </div>
      <div className={`-mx-[4px] px-[4px] pt-[3px] h-[94px] ${hr}`}>
        <StatRow a="换手" av="1.04%" ac={WC} b="股本" bv="7.96亿" bc={WC} />
        <StatRow a="净资" av="4.17" ac={WC} b="流通" bv="7.73亿" bc={WC} />
        <StatRow a={<>收益<span className="text-[16px]">(三)</span></>} av="0.120" ac={WC} b={<><span className="font-bold text-[21px]">PE</span><span className="text-[19px]">(动)</span></>} bv="147.9" bc={WC} />
      </div>
      <div className={`-mx-[4px] px-[4px] pt-[2px] h-[120px] ${hr}`}>
        <FlowRow l="净流入额" bar="w-[3px] h-[10px] bg-[#ff2020]" v="3701" u="万" p="19%" c="text-[#ff2828]" />
        <FlowRow l="大宗流入" bar="w-[2px] h-[10px] bg-[#ff2020]" v="1445" u="万" p="8%" c="text-[#ff2828]" />
        <FlowRow l={<span className="tracking-[0.4px]"><b className="text-[21px]">5</b>日净流入额</span>} bar="w-[36px] h-[10px] bg-[#00e800]" v="-3.81" u="亿" p="-9%" c={GC} />
        <FlowRow l={<span className="tracking-[0.4px]"><b className="text-[21px]">5</b>日大宗流入</span>} bar="w-[23px] h-[10px] bg-[#00e800]" v="-2.40" u="亿" p="-6%" c={GC} />
      </div>
      <div className="pt-[1px]">
        {trades.map(([t, p, v, s, n], i) => (
          <div key={i} className={`h-[27px] flex items-center ${NUM}`}>
            <div className="w-[103px] text-[#b8b8b8]">{t}</div>
            <div className={`w-[52px] ${RC}`}>{p}</div>
            <div className={`w-[95px] text-right ${v === "3609" ? "text-[#c000c0]" : YC}`}>{v}</div>
            <div className={`w-[46px] text-center ${s === "S" ? GC : RC}`}>{s}</div>
            <div className="flex-1 text-right text-[#808080]">{n}</div>
          </div>
        ))}
      </div>
    </div>
  );
}

const IB = ({ children }: { children: React.ReactNode }) => (
  <div className="w-[23px] h-[23px] bg-white border-2 border-[#3c9ae8] rounded-[2px] flex items-center justify-center overflow-hidden">{children}</div>
);
const S = ({ children }: { children: React.ReactNode }) => <div className="h-[33px] flex items-center justify-center shrink-0">{children}</div>;
const BT = ({ children }: { children: React.ReactNode }) => <div className="h-[33px] flex items-center justify-center shrink-0 text-[#2850a8] text-[18px] leading-none">{children}</div>;
const arrowProps = { fill: "#fff", stroke: "#4a90e8", strokeWidth: 1.6 };

function IconColumn() {
  return (
    <div className="flex-1 h-full bg-[#f0f0f0] flex flex-col">
      <S><svg width="24" height="22" viewBox="0 0 24 22"><path d="M2 11 L12 2 V7 H22 V15 H12 V20 Z" {...arrowProps} /></svg></S>
      <S><svg width="22" height="24" viewBox="0 0 22 24"><path d="M11 2 L20 12 H15 V22 H7 V12 H2 Z" {...arrowProps} /></svg></S>
      <S><svg width="22" height="24" viewBox="0 0 22 24"><path d="M11 22 L20 12 H15 V2 H7 V12 H2 Z" {...arrowProps} /></svg></S>
      <S><IB><svg width="18" height="18" viewBox="0 0 18 18"><path d="M1 3H8M1 6H8M1 9H7M1 12H6" stroke="#108010" strokeWidth="1.6" /><path d="M9 3H17M9 6H17" stroke="#e02020" strokeWidth="1.6" /><circle cx="13" cy="13" r="4" fill="#fff" stroke="#707070" strokeWidth="1.4" /><path d="M13 11V13H15" stroke="#707070" fill="none" /></svg></IB></S>
      <S><IB><svg width="18" height="18" viewBox="0 0 18 18"><path d="M3 2V16" stroke="#e02020" strokeWidth="3" strokeDasharray="2 1" /><path d="M7.5 2V16" stroke="#10a010" strokeWidth="3" strokeDasharray="2 1" /><path d="M12 2V16" stroke="#2020e0" strokeWidth="3" strokeDasharray="2 1" /><path d="M16 2V16" stroke="#e02020" strokeWidth="2.4" strokeDasharray="2 1" /></svg></IB></S>
      <S><IB><svg width="18" height="18" viewBox="0 0 18 18"><path d="M1 13 L5 9 L8 11 L12 6 L14 8 L17 3" stroke="#e02020" strokeWidth="1.6" fill="none" /></svg></IB></S>
      <S><IB><svg width="18" height="18" viewBox="0 0 18 18"><path d="M4 4V14M9 1V15M14 2V12" stroke="#303030" /><rect x="2.5" y="6" width="3" height="6" fill="#e02020" /><rect x="7.5" y="5" width="3" height="7" fill="#109010" /><rect x="12.5" y="3" width="3" height="6" fill="#e02020" /></svg></IB></S>
      <S><svg width="24" height="22" viewBox="0 0 24 22"><rect x="7" y="1" width="16" height="14" fill="#fff" stroke="#4a90e8" strokeWidth="1.6" /><rect x="1" y="6" width="17" height="15" fill="#fff" stroke="#4a90e8" strokeWidth="1.6" /><path d="M4 11H15M4 14H15M4 17H15" stroke="#606060" strokeWidth="1.4" strokeDasharray="3 1" /></svg></S>
      <S><IB><span className="text-[15px] font-bold text-[#2850c0] tracking-[-1px]">Fıo</span></IB></S>
      <S><IB><svg width="18" height="18" viewBox="0 0 18 18"><rect x="1" y="1" width="7" height="4" fill="#f0c030" /><rect x="9" y="6" width="7" height="4" fill="#f0c030" /><rect x="9" y="12" width="7" height="4" fill="#f0c030" /><path d="M3 5V14H9M3 8H9" stroke="#6080c0" fill="none" /></svg></IB></S>
      <S><IB><span className="text-[16px] font-bold text-[#f07030]">自</span></IB></S>
      <S><IB><span className="text-[15px] font-bold text-[#2850c0] tracking-[-1px]">Fız</span></IB></S>
      <S><div className="w-[24px] h-[24px] rounded-[6px] bg-white border-2 border-[#40a0a0] flex items-center justify-center text-[13px] font-bold italic text-[#1850a0] leading-none">f(x)</div></S>
      <S><IB><div className="w-[14px] h-[14px] rounded-full border-2 border-[#3c70c8]" /></IB></S>
      <div className="h-[11px] flex items-center justify-center shrink-0"><div className="w-[28px] h-[2px] bg-[#c0c0c0]" /></div>
      <S><IB><svg width="18" height="18" viewBox="0 0 18 18"><path d="M1 6 L4 4 L7 7 L10 4 L13 6 L17 3" stroke="#e02020" strokeWidth="1.3" fill="none" strokeDasharray="2 1" /><path d="M1 13 L4 11 L7 14 L10 11 L13 13 L17 10" stroke="#3030e0" strokeWidth="1.3" fill="none" strokeDasharray="2 1" /></svg></IB></S>
      <BT><span className="font-bold text-[#3058c0] text-[17px] tracking-[-1px]">RSI</span></BT>
      <S><div className="flex flex-col items-center leading-none"><svg width="12" height="6" viewBox="0 0 12 6"><path d="M6 0 L12 6 H0 Z" fill="#d83030" /></svg><span className="text-[20px] font-bold text-[#d83030] leading-[20px]">S</span></div></S>
      <S><svg width="24" height="24" viewBox="0 0 24 24"><path d="M12 1 L16 6 H14 V10 H18 V8 L23 12 L18 16 V14 H14 V18 H16 L12 23 L8 18 H10 V14 H6 V16 L1 12 L6 8 V10 H10 V6 H8 Z" fill="#1050d0" /></svg></S>
      <S><svg width="24" height="24" viewBox="0 0 24 24"><path d="M3 21 L5 15 L17 3 L21 7 L9 19 Z" fill="#f0a830" stroke="#a07020" /><path d="M3 21 L5 15 L9 19 Z" fill="#e8d0a0" /><path d="M17 3 L21 7" stroke="#d06060" strokeWidth="2" /></svg></S>
      <div className="h-[14px] flex items-center justify-center shrink-0"><div className="w-[28px] h-[2px] bg-[#c0c0c0]" /></div>
      <S><IB><span className="text-[15px] font-bold text-[#2850c0]">F5</span></IB></S>
      <S><IB><svg width="18" height="18" viewBox="0 0 18 18"><path d="M3 8 A6 6 0 0 1 14 6 M15 10 A6 6 0 0 1 4 12" stroke="#50c070" strokeWidth="2.4" fill="none" /><path d="M15 2 V7 H10 Z M3 16 V11 H8 Z" fill="#50c070" /></svg></IB></S>
      {["1", "5", "15", "30", "60"].map((t) => <BT key={t}>{t}</BT>)}
      <div className="h-[33px] shrink-0 flex items-center justify-center text-[#2850a8] text-[18px] leading-none border-t border-l border-[#c8c8c8] bg-[#fafafa]">日</div>
      {["周", "月", "N", "多", "季", "年"].map((t) => <BT key={t}>{t}</BT>)}
    </div>
  );
}

function Watermark() {
  return (
    <div className="absolute left-[1080px] top-[1286px] w-[1080px] h-[109px] bg-[#7eabd9] flex items-center overflow-hidden">
      <div className="ml-[22px] w-[392px] shrink-0 text-[75px] font-black leading-none text-[#170a8c] whitespace-nowrap">公式指标网</div>
      <svg width="110" height="109" viewBox="-55 -54 110 109" className="ml-[19px] shrink-0">
        <defs>
          <path id="wmRing" d="M-36 -4 A37 37 0 0 0 6 36" fill="none" />
        </defs>
        <path d="M-46 -4 A47 47 0 0 1 46 -4" fill="none" stroke="#d9604a" strokeWidth="14" />
        <path d="M46 0 A47 47 0 0 1 -46 0" fill="none" stroke="#e8c948" strokeWidth="14" />
        <path d="M-8 -52 H8 L12 -30 H21 V28 H10 L14 52 H-14 L-10 28 H-21 V-30 H-12 Z" fill="#e8c948" />
        <path d="M-18 -16 H18 M-18 -4 H18 M-18 10 H18 M0 -28 V26 M-12 18 L-16 28 M12 18 L16 28" stroke="#a87830" strokeWidth="3" fill="none" />
        <circle cx="0" cy="-42" r="3.5" fill="#7eabd9" />
        <text fontSize="8.5" fill="#2a3a5a"><textPath href="#wmRing">www.9m8.cn</textPath></text>
      </svg>
      <div className="ml-[35px] shrink-0 text-[71px] font-bold leading-none text-[#fbfbff] whitespace-nowrap [font-family:'DejaVu_Serif',serif] scale-y-[1.12]">www.9m8.cn</div>
    </div>
  );
}

function StatusBar() {
  const nb = "text-[21px] font-bold leading-none";
  const cj = "text-[24px] text-[#202020] leading-none";
  return (
    <div className="h-[36px] bg-[#f4f4f4] flex items-center whitespace-nowrap">
      <div className="w-[25px] flex justify-center">
        <div className="w-[20px] h-[24px] bg-[#f0b840] border-2 border-[#d09020] rounded-[3px] flex items-center justify-center"><div className="w-[10px] h-[10px] bg-[#fff0b0]" /></div>
      </div>
      <div className={`${cj} w-[54px]`}>上证</div>
      <div className={`${nb} w-[100px] text-[#008000]`}>2871.00</div>
      <div className={`${nb} w-[74px] text-[#008000]`}>-6.70</div>
      <div className={`${nb} w-[89px] text-[#008000]`}>-0.23%</div>
      <div className={`${nb} w-[94px] text-black`}>491.2<span className="font-normal text-[24px]">亿</span></div>
      <div className={`${cj} w-[54px]`}>深证</div>
      <div className={`${nb} w-[101px] text-[#ff0000]`}>8937.76</div>
      <div className={`${nb} w-[76px] text-[#ff0000]`}>14.97</div>
      <div className={`${nb} w-[85px] text-[#ff0000]`}>0.17%</div>
      <div className={`${nb} w-[98px] text-black`}>695.8<span className="font-normal text-[24px]">亿</span></div>
      <div className={`${cj} w-[52px]`}>中小</div>
      <div className={`${nb} w-[102px] text-[#ff0000]`}>5609.19</div>
      <div className={`${nb} text-[#ff0000]`}>14.32</div>
    </div>
  );
}

export default function App() {
  const menu = ["行情", "市场", "资讯", "数据", "专题", "发现", "交易", "行业", "热点"];
  return (
    <div className="relative w-[2160px] h-[1395px] overflow-hidden bg-black [font-family:'Liberation_Sans','Noto_Sans_CJK_SC',sans-serif]">
      <div className="h-[36px] bg-[#f2f2f2] border-b-2 border-[#a8a8a8] flex items-center text-[18px] leading-none text-[#303030]">
        <div className="w-[36px] flex justify-center">
          <svg width="27" height="26" viewBox="0 0 27 26"><rect width="27" height="26" fill="#d02020" /><path d="M4 21 C8 12 14 11 17 10 L23 2 C22 12 16 16 11 15 C9 17 7 20 4 21 Z" fill="#fff" /></svg>
        </div>
        <div className="w-[172px]">通达信金融终端</div>
        {menu.map((t) => <div key={t} className="w-[72px]">{t}</div>)}
        <div className="w-[307px] text-[16px]">L1L2</div>
        <div className="w-[118px] text-[19px] text-[#ff2020] whitespace-nowrap">交易未登录</div>
        <div className="w-[315px] text-[19px] text-[#ff2020]">润和软件</div>
        {["功能", "版面", "公式", "选项"].map((t) => <div key={t} className="w-[57px]">{t}</div>)}
        <div className="w-[55px]">帮助</div>
        <div className="w-[124px] h-full flex items-center border-x border-[#b0b0b0]">
          <span className="ml-[2px] w-[82px] text-[15px] tracking-[1.3px]">09:42:48</span>
          <span>周四</span>
        </div>
        <div className="flex-1 flex items-center">
          <svg className="ml-[20px]" width="14" height="20" viewBox="0 0 14 20"><path d="M11 2 L4 10 L11 18" stroke="#303030" strokeWidth="2.6" fill="none" /></svg>
          <div className="ml-[22px] w-[13px] h-[3px] bg-[#303030]" />
          <svg className="ml-[21px]" width="18" height="18" viewBox="0 0 18 18"><rect x="6" y="2" width="10" height="10" fill="none" stroke="#202020" strokeWidth="2" /><rect x="2" y="6" width="10" height="10" fill="#f2f2f2" stroke="#202020" strokeWidth="2.5" /></svg>
          <svg className="ml-[14px]" width="16" height="16" viewBox="0 0 16 16"><path d="M2 1 L14 15 M14 1 L2 15" stroke="#303030" strokeWidth="2.2" /></svg>
        </div>
      </div>
      <div className="flex h-[1323px]">
        <div className="w-[1787px] flex flex-col">
          <Toolbar />
          <div className="relative h-[699px]">
            <TopChart />
            <div className="absolute left-0 top-0 h-[28px] flex items-center pl-[5px] text-[17.5px] leading-none whitespace-nowrap">
              <span className="text-[18px] text-[#b8b8b8] w-[128px]">润和软件(日线)</span>
              <ChevronCircle />
              <span className="ml-[8px] w-[98px] text-[#e8e8e8]">MA5: 24.58</span>
              <span className="w-[107px] text-[#f0f000]">MA10: 25.18</span>
              <span className="w-[109px] text-[#f000f0]">MA20: 25.65</span>
              <span className="text-[#00f000]">MA60: 26.48</span>
            </div>
            <div className="absolute left-[1663px] top-[6px] flex items-center gap-[12px]">
              <svg width="13" height="15" viewBox="0 0 13 15"><path d="M6.5 1 L12 7.5 L6.5 14 L1 7.5 Z" fill="none" stroke="#808080" /></svg>
              <div className="w-[15px] h-[16px] border-2 border-[#808080] rounded-[3px] flex justify-end"><div className="w-[5px] bg-[#808080]" /></div>
            </div>
          </div>
          <div className="relative h-[515px]">
            <SubChart />
            <div className="absolute left-[2px] top-[2px] h-[24px] flex items-center text-[18.5px] leading-none whitespace-nowrap">
              <ChevronCircle />
              <span className="ml-[7px] w-[79px] text-[18px] text-[#b8b8b8]">机构量化</span>
              <span className="w-[152px] text-[#0a7a0a]">流出: 5104440.00</span>
              <span className="w-[154px] text-[#b01818]">流入: 1982892.38</span>
              <span className="text-[#b000b0]">X_19: 5860814.00</span>
            </div>
          </div>
          <XAxis />
          <ButtonRow
            h="h-[26px]"
            items={[
              ["指标", "w-[45px]"], ["窗口", "w-[47px]"], ["MACD", "w-[64px]"], ["VOL-TDX", "w-[86px]"], ["CCI", "w-[44px]"], ["趋势动力", "w-[84px]"], ["主力监控", "w-[83px]"], ["私募主图", "w-[86px]"], ["MA2", "w-[45px]"], ["测试主图", "w-[84px]"], ["测试幅图A", "w-[94px]"], ["测试幅图B", "w-[98px]"], ["更多", "w-[46px]"], ["设置", "w-[49px]", "text-[#40e0e0]"],
            ]}
          />
          <ButtonRow
            h="h-[27px]"
            items={[
              ["扩展∧", "w-[61px]"], ["关联报价", "w-[84px]"], ["资金分布", "w-[84px]"], ["综合资讯", "w-[84px]", "text-[#c8c800]"], ["行业资讯", "w-[84px]", "text-[#c8c800]"], ["互动问答", "w-[84px]", "text-[#c8c800]"], ["普及版功能说明", "w-[137px]"],
            ]}
          />
        </div>
        <InfoPanel />
        <IconColumn />
      </div>
      <StatusBar />
      <Watermark />
    </div>
  );
}
